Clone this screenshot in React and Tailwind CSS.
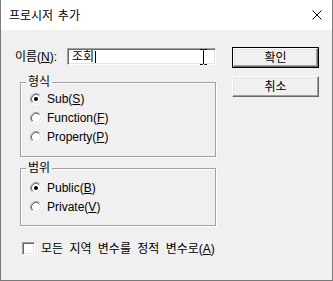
import React from 'react';

const ui = "font-['Liberation_Sans','Noto_Sans_CJK_KR',sans-serif] text-[12px] leading-none text-black";

function Radio({ checked }) {
  return (
    <svg width="12" height="12" viewBox="0 0 12 12" className="shrink-0">
      <circle cx="6" cy="6" r="4" fill="#fff" />
      <path d="M2.11 9.89 A5.5 5.5 0 0 1 9.89 2.11" fill="none" stroke="#a0a0a0" strokeWidth="1" />
      <path d="M9.89 2.11 A5.5 5.5 0 0 1 2.11 9.89" fill="none" stroke="#fff" strokeWidth="1" />
      <path d="M2.82 9.18 A4.5 4.5 0 0 1 9.18 2.82" fill="none" stroke="#696969" strokeWidth="1" />
      <path d="M9.18 2.82 A4.5 4.5 0 0 1 2.82 9.18" fill="none" stroke="#e3e3e3" strokeWidth="1" />
      {checked && <circle cx="6" cy="6" r="2" fill="#000" />}
    </svg>
  );
}

function RadioRow({ label, hotkey, checked }) {
  return (
    <div className="flex h-[19px] items-center gap-[5px]">
      <Radio checked={checked} />
      <span>
        {label}(<u className="underline-offset-1">{hotkey}</u>)
      </span>
    </div>
  );
}

function Group({ title, className, children }) {
  return (
    <div
      className={`relative ml-[5px] w-[196px] border border-[#a0a0a0] shadow-[inset_1px_1px_0_#fff,1px_1px_0_#fff] ${className}`}
    >
      <span className="absolute -top-[7px] left-[5px] bg-[#f0f0f0] px-[2px]">{title}</span>
      {children}
    </div>
  );
}

function Button({ label, primary }) {
  return (
    <div className={`h-[21px] w-[87px] bg-[#f0f0f0] ${primary ? 'border border-black' : ''}`}>
      <div className="flex h-full w-full items-center justify-center border border-t-white border-l-white border-r-[#696969] border-b-[#696969] shadow-[inset_-1px_-1px_0_#a0a0a0,inset_1px_1px_0_#e3e3e3]">
        {label}
      </div>
    </div>
  );
}

export default function App() {
  return (
    <div className={`flex h-[281px] w-[333px] flex-col border-x border-b border-[#7a7a7a] ${ui}`}>
      <div className="flex h-[30px] shrink-0 items-center justify-between bg-white pl-[8px] pr-[10px]">
        <span className="font-['Noto_Sans_CJK_KR',sans-serif] text-[12px] [word-spacing:2px]">프로시저 추가</span>
        <svg width="10" height="10" viewBox="0 0 10 10">
          <path d="M0.5 0.5L9.5 9.5M9.5 0.5L0.5 9.5" stroke="#000" strokeWidth="1" />
        </svg>
      </div>

      <div className="flex flex-1 bg-[#f0f0f0]">
        <div className="flex w-[231px] flex-col pl-[14px] pt-[18px]">
          <div className="flex h-[17px] items-center">
            <span className="w-[52px] shrink-0">
              이름(<u className="underline-offset-1">N</u>):
            </span>
            <div className="relative flex h-[17px] w-[149px] items-center border border-t-[#a0a0a0] border-l-[#a0a0a0] border-r-white border-b-white bg-white pl-[4px] shadow-[inset_1px_1px_0_#696969,inset_-1px_-1px_0_#e3e3e3]">
              <span>조회</span>
              <span className="ml-px h-[12px] w-px bg-black" />
              <svg width="9" height="16" viewBox="0 0 9 16" className="absolute right-[7px] top-0">
                <path d="M1 0.5H3.5L4.5 1.5L5.5 0.5H8M4.5 1.5V14.5M1 15.5H3.5L4.5 14.5L5.5 15.5H8" fill="none" stroke="#000" strokeWidth="1" />
              </svg>
            </div>
          </div>

          <Group title="형식" className="mt-[17px] h-[75px] pl-[9px] pt-[6px]">
            <RadioRow label="Sub" hotkey="S" checked />
            <RadioRow label="Function" hotkey="F" />
            <RadioRow label="Property" hotkey="P" />
          </Group>

          <Group title="범위" className="mt-[11px] h-[58px] pl-[9px] pt-[9px]">
            <RadioRow label="Public" hotkey="B" checked />
            <RadioRow label="Private" hotkey="V" />
          </Group>

          <div className="ml-[7px] mt-[16px] flex items-center gap-[6px]">
            <div className="h-[13px] w-[13px] shrink-0 border border-t-[#a0a0a0] border-l-[#a0a0a0] border-r-white border-b-white bg-white shadow-[inset_1px_1px_0_#696969,inset_-1px_-1px_0_#e3e3e3]" />
            <span className="whitespace-nowrap [word-spacing:3px]">
              모든 지역 변수를 정적 변수로(<u className="underline-offset-1">A</u>)
            </span>
          </div>
        </div>

        <div className="flex flex-col gap-[8px] pt-[17px]">
          <Button label="확인" primary />
          <Button label="취소" />
        </div>
      </div>
    </div>
  );
}
